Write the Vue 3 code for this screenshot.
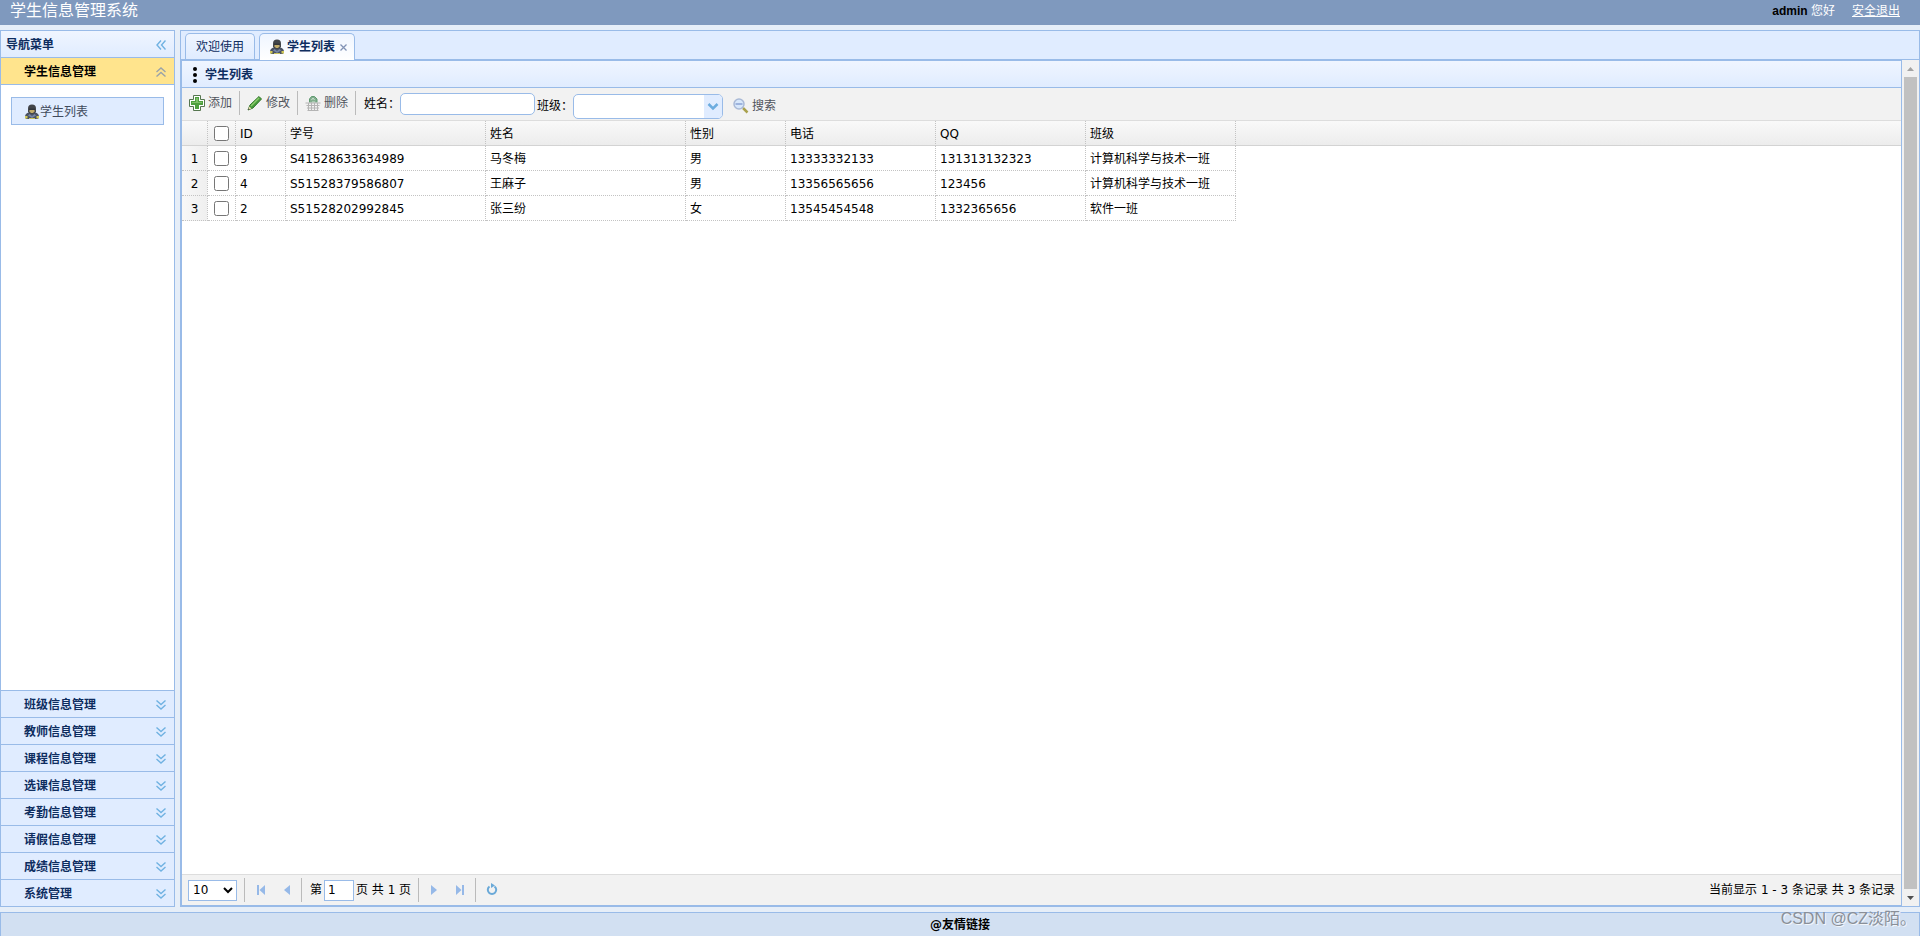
<script setup>
import { ref } from 'vue'

const openMenu = ref('学生信息管理')
const menus = [
  '班级信息管理',
  '教师信息管理',
  '课程信息管理',
  '选课信息管理',
  '考勤信息管理',
  '请假信息管理',
  '成绩信息管理',
  '系统管理'
]
const columns = ['ID', '学号', '姓名', '性别', '电话', 'QQ', '班级']
const rows = [
  ['9', 'S41528633634989', '马冬梅', '男', '13333332133', '131313132323', '计算机科学与技术一班'],
  ['4', 'S51528379586807', '王麻子', '男', '13356565656', '123456', '计算机科学与技术一班'],
  ['2', 'S51528202992845', '张三纷', '女', '13545454548', '1332365656', '软件一班']
]
const name = ref('')
const clazz = ref('')
const page = ref('1')
const pageSize = ref('10')
</script>

<template>
  <div class="app">
    <svg class="defs" aria-hidden="true">
      <symbol id="user" viewBox="0 0 16 16">
        <path d="M1 13q0-4 4-4.500h6q4 .5 4 4.500l-1 2H2z" fill="#4a5264" />
        <path d="M4 4.500Q4 .500 8 .500t4 4V8q-1 2-4 2T4 8z" fill="#42454a" />
        <path d="M5.500 5h5v2.500L9 9H7L5.500 7.500z" fill="#c2ac6a" />
        <path d="M5 4.500h6V6H5z" fill="#33363b" />
        <path d="M5.500 10L8 12l2.500-2 1.500 1.500L8 14l-4-2.500z" fill="#7484a4" />
        <path d="M1 12h2.500v2.500H1zM12.500 12H15v2.500h-2.500z" fill="#cfc758" />
        <path d="M5 14h6v1H5z" fill="#c9c25b" />
      </symbol>
      <symbol id="down" viewBox="0 0 10 10">
        <path d="M.5.500L5 4.500 9.500.500M.5 5L5 9 9.500 5" fill="none" stroke="currentColor" stroke-width="1.400" />
      </symbol>
    </svg>

    <header class="top">
      <span class="brand">学生信息管理系统</span>
      <span class="account"><strong>admin</strong> 您好</span>
      <a class="logout" href="#">安全退出</a>
    </header>

    <div class="body">
      <aside class="side">
        <div class="side-title">
          <span>导航菜单</span>
          <button class="bare light" type="button" aria-label="收起导航">
            <svg class="chev left"><use href="#down" /></svg>
          </button>
        </div>
        <button class="acc open" type="button">
          <span>{{ openMenu }}</span>
          <svg class="chev up"><use href="#down" /></svg>
        </button>
        <nav class="side-content">
          <a class="nav-item" href="#"><svg class="i16"><use href="#user" /></svg>学生列表</a>
        </nav>
        <button v-for="m in menus" :key="m" class="acc" type="button">
          <span>{{ m }}</span>
          <svg class="chev"><use href="#down" /></svg>
        </button>
      </aside>

      <main class="center">
        <div class="tabs">
          <button class="tab" type="button">欢迎使用</button>
          <div class="tab active">
            <button class="tab-label" type="button"><svg class="i16"><use href="#user" /></svg>学生列表</button>
            <button class="bare close" type="button" aria-label="关闭">
              <svg viewBox="0 0 7 7" width="7" height="7"><path d="M.5.500l6 6M6.500.500l-6 6" stroke="#8192b5" stroke-width="1.300" /></svg>
            </button>
          </div>
        </div>

        <div class="frame">
          <section class="panel">
            <h1 class="panel-title">
              <svg class="dots" viewBox="0 0 16 16" aria-hidden="true">
                <circle cx="8" cy="2" r="2" /><circle cx="8" cy="8" r="2" /><circle cx="8" cy="14" r="2" />
              </svg>学生列表
            </h1>

            <div class="toolbar">
              <div class="tools">
                <button class="tool" type="button">
                  <svg class="i16" viewBox="0 0 16 16">
                    <path d="M4.500 .500h7v4h4v7h-4v4h-7v-4h-4v-7h4z" fill="#fff" stroke="#56764f" stroke-linejoin="round" />
                    <path d="M6 2h4v4h4v4h-4v4H6v-4H2V6h4z" fill="#4f9f3f" />
                    <path d="M7 3h2v4h4v1H3V7h4z" fill="#7fc069" />
                  </svg>添加
                </button>
                <button class="tool" type="button">
                  <svg class="i16" viewBox="0 0 16 16">
                    <path d="M1 15l2-5 9-8.500 2.500 2.500-8.500 9z" fill="#469b3b" stroke="#35782e" />
                    <path d="M4 11l8-8" stroke="#8ccc6b" stroke-width="1.500" />
                    <path d="M1 15l1.300-3.500 2.200 2z" fill="#ead9ae" />
                    <path d="M1 15l.6-1.600 1 1z" fill="#333" />
                  </svg>修改
                </button>
                <button class="tool" type="button">
                  <svg class="i16" viewBox="0 0 16 16">
                    <path d="M4.500 8V4l2-2.500h3L12 4v4z" fill="#82ae8e" stroke="#5f9a70" />
                    <path d="M6.500 5L8 3l1.500 2M7 7h3" stroke="#c9e2ce" fill="none" />
                    <path d="M.5 7.500h15l-1.500 8H2z" fill="#f1f1f1" />
                    <path d="M.5 8h15M1.500 10.500h13M2 13h12M2.500 15.500h11M3.500 8v7M6.500 8v7M9.500 8v7M12.500 8v7" stroke="#b4b4b4" />
                  </svg>删除
                </button>
              </div>
              <label class="field-label" for="name">姓名：</label>
              <input id="name" v-model="name" class="text" type="text">
              <div class="tools low">
                <label class="class-label" for="clazz">班级：</label>
                <div class="combo">
                  <select id="clazz" v-model="clazz"><option value=""></option></select>
                  <svg class="combo-arrow" viewBox="0 0 18 23" aria-hidden="true">
                    <path d="M4.500 9l4.500 4.500L13.500 9" fill="none" stroke="#6cacdf" stroke-width="2.500" />
                  </svg>
                </div>
                <button class="tool search" type="button">
                  <svg class="i16" viewBox="0 0 16 16">
                    <path d="M10 10l4.500 4.500" stroke="#a9a14d" stroke-width="2.500" />
                    <circle cx="6" cy="6" r="5" fill="#d7e7fb" stroke="#a9b9d6" stroke-width="1.500" />
                    <path d="M2.500 6h7" stroke="#9db3dd" stroke-width="2" />
                  </svg>搜索
                </button>
              </div>
            </div>

            <div class="grid">
              <table>
                <colgroup>
                  <col class="w26"><col class="w28"><col class="w50"><col class="w200"><col class="w200">
                  <col class="w100"><col class="w150"><col class="w150"><col class="w150"><col>
                </colgroup>
                <thead>
                  <tr>
                    <th></th>
                    <th class="check"><input type="checkbox" aria-label="全选"></th>
                    <th v-for="c in columns" :key="c">{{ c }}</th>
                    <th class="fill"></th>
                  </tr>
                </thead>
                <tbody>
                  <tr v-for="(r, i) in rows" :key="r[0]">
                    <td class="num">{{ i + 1 }}</td>
                    <td class="check"><input type="checkbox" :aria-label="'选择 ' + r[2]"></td>
                    <td v-for="(v, j) in r" :key="j">{{ v }}</td>
                    <td class="fill"></td>
                  </tr>
                </tbody>
              </table>
            </div>

            <div class="pager">
              <select v-model="pageSize" class="size" aria-label="每页条数"><option>10</option></select>
              <div class="group">
                <button class="bare pg" type="button" aria-label="首页">
                  <svg viewBox="0 0 16 16"><path d="M4 3h2v10H4zM12 3v10L6.500 8z" /></svg>
                </button>
                <button class="bare pg" type="button" aria-label="上一页">
                  <svg viewBox="0 0 16 16"><path d="M12 3v10L6 8z" /></svg>
                </button>
              </div>
              <div class="group pages">
                <label for="page">第</label>
                <input id="page" v-model="page" class="page" type="text">
                <span>页 共 1 页</span>
              </div>
              <div class="group">
                <button class="bare pg" type="button" aria-label="下一页">
                  <svg viewBox="0 0 16 16"><path d="M4 3v10l6-5z" /></svg>
                </button>
                <button class="bare pg" type="button" aria-label="末页">
                  <svg viewBox="0 0 16 16"><path d="M4 3v10l5.500-5zM10 3h2v10h-2z" /></svg>
                </button>
              </div>
              <div class="group">
                <button class="bare pg" type="button" aria-label="刷新">
                  <svg viewBox="0 0 16 16">
                    <path d="M5.500 4.500a4.200 4.200 0 1 0 5 0" fill="none" stroke="#6aa9d8" stroke-width="2" />
                    <path d="M7 1l4 2.500-4 2.500z" fill="#6aa9d8" />
                  </svg>
                </button>
              </div>
              <span class="info">当前显示 1 - 3 条记录 共 3 条记录</span>
            </div>
          </section>

          <div class="scroll" aria-hidden="true">
            <svg viewBox="0 0 17 17"><path d="M5 11h7L8.500 7z" fill="#a3a3a3" /></svg>
            <div class="thumb"></div>
            <svg viewBox="0 0 17 17"><path d="M5 7h7l-3.500 4z" fill="#505050" /></svg>
          </div>
        </div>
      </main>
    </div>

    <footer class="foot">
      @友情链接
      <span class="mark">CSDN @CZ淡陌。</span>
    </footer>
  </div>
</template>

<style>
body {
  margin: 0;
}
</style>

<style scoped>
.app,
.app * {
  box-sizing: border-box;
}
.app {
  display: flex;
  flex-direction: column;
  gap: 5px;
  height: 100vh;
  overflow: hidden;
  background: #e6eef8;
  color: #000;
  font: 12px/16px "DejaVu Sans", "Noto Sans CJK SC", sans-serif;
}
.defs {
  position: absolute;
  width: 0;
  height: 0;
}
button,
input,
select {
  margin: 0;
  font: inherit;
  color: inherit;
}
button {
  padding: 0;
  border: 0;
  background: none;
}
.bare {
  display: flex;
}
.i16 {
  flex: none;
  width: 16px;
  height: 16px;
}

.top {
  display: flex;
  flex: none;
  height: 25px;
  padding: 0 20px 0 10px;
  background: #7f99be;
  color: #fff;
  line-height: 22px;
  font-family: "Liberation Sans", "Noto Sans CJK SC", sans-serif;
}
.brand {
  flex: 1;
  font-size: 16px;
}
.account strong {
  color: #000;
}
.logout {
  margin-left: 17px;
  color: #fff;
}

.body {
  display: flex;
  flex: 1;
  gap: 5px;
  min-height: 0;
}
.side {
  display: flex;
  flex-direction: column;
  flex: none;
  width: 175px;
  border: 1px solid #99bbe8;
  background: #fff;
}
.side-title {
  display: flex;
  flex: none;
  align-items: center;
  justify-content: space-between;
  height: 27px;
  padding: 1px 8px 0 5px;
  border-bottom: 1px solid #99bbe8;
  background: linear-gradient(#eff5ff, #e0ecff);
  color: #0e2d5f;
  font-weight: bold;
}
.light {
  color: #6fb5ea;
}
.chev {
  width: 10px;
  height: 10px;
  color: #70b2e2;
}
.chev.left {
  transform: rotate(90deg);
}
.chev.up {
  transform: rotate(180deg);
  color: #9aa3a8;
}
.acc {
  display: flex;
  flex: none;
  align-items: center;
  justify-content: space-between;
  height: 27px;
  padding: 1px 8px 0 23px;
  border-top: 1px solid #99bbe8;
  background: #e0ecff;
  color: #0e2d5f;
  font-weight: bold;
}
.acc.open {
  border-top: 0;
  border-bottom: 1px solid #99bbe8;
  background: #ffe48d;
  color: #000;
}
.side-content {
  flex: 1;
  padding: 12px 10px;
}
.nav-item {
  display: flex;
  align-items: center;
  height: 28px;
  padding: 2px 0 0 12px;
  border: 1px solid #99bbe8;
  background: #e0ecff;
  color: #404a5c;
  text-decoration: none;
}

.center {
  display: flex;
  flex-direction: column;
  flex: 1;
  min-width: 0;
  border: 1px solid #99bbe8;
  background: #fff;
}
.tabs {
  display: flex;
  flex: none;
  gap: 4px;
  height: 29px;
  padding: 2px 4px 0;
  border-bottom: 1px solid #99bbe8;
  background: #e0ecff;
}
.tab {
  display: flex;
  align-items: center;
  height: 26px;
  padding: 0 10px;
  border: 1px solid #99bbe8;
  border-bottom: 0;
  border-radius: 5px 5px 0 0;
  background: linear-gradient(#eff5ff, #e0ecff);
  color: #0e2d5f;
}
.tab.active {
  gap: 5px;
  height: 27px;
  padding: 0 7px 0 9px;
  background: linear-gradient(#eff5ff, #fff);
}
.tab-label {
  display: flex;
  align-items: center;
  gap: 2px;
  font-weight: bold;
}
.frame {
  display: flex;
  flex: 1;
  min-height: 0;
}
.panel {
  display: flex;
  flex-direction: column;
  flex: 1;
  min-width: 0;
  border: 1px solid #99bbe8;
}
.panel-title {
  display: flex;
  flex: none;
  align-items: center;
  gap: 2px;
  height: 27px;
  margin: 0;
  padding: 1px 5px 0;
  border-bottom: 1px solid #99bbe8;
  background: linear-gradient(#eff5ff, #e0ecff);
  color: #0e2d5f;
  font: inherit;
  font-weight: bold;
}
.dots {
  width: 16px;
  height: 16px;
  fill: #000;
}
.toolbar {
  display: flex;
  flex: none;
  align-items: center;
  height: 33px;
  border-bottom: 1px solid #ddd;
  background: #f2f2f2;
}
.tools {
  display: flex;
  align-self: flex-start;
  align-items: center;
  height: 29px;
}
.tools.low {
  align-self: flex-end;
  height: 28px;
}
.tool {
  display: flex;
  align-items: center;
  gap: 3px;
  height: 24px;
  padding: 0 7px;
  border-right: 1px solid #bbb;
  color: #50545c;
}
.tool.search {
  margin-left: 3px;
  border-right: 0;
}
.field-label {
  padding-left: 8px;
}
.text {
  width: 135px;
  height: 22px;
  padding: 0 4px;
  border: 1px solid #99bbe8;
  border-radius: 5px;
  background: #fff;
}
.class-label {
  padding-left: 2px;
}
.combo {
  position: relative;
  display: flex;
  width: 150px;
  height: 25px;
}
.combo select {
  width: 100%;
  padding: 0 20px 0 4px;
  border: 1px solid #99bbe8;
  border-radius: 5px;
  background: #fff;
  appearance: none;
}
.combo-arrow {
  position: absolute;
  top: 1px;
  right: 1px;
  width: 18px;
  height: 23px;
  border-radius: 0 4px 4px 0;
  background: #e0ecff;
  pointer-events: none;
}

.grid {
  flex: 1;
  min-height: 0;
  overflow: hidden;
}
table {
  width: 100%;
  table-layout: fixed;
  border-spacing: 0;
}
.w26 { width: 26px; }
.w28 { width: 28px; }
.w50 { width: 50px; }
.w100 { width: 100px; }
.w150 { width: 150px; }
.w200 { width: 200px; }
th,
td {
  height: 25px;
  padding: 2px 4px 0;
  border-right: 1px dotted #c3c3c3;
  border-bottom: 1px dotted #c3c3c3;
  font-weight: normal;
  text-align: left;
  white-space: nowrap;
}
thead tr {
  background: linear-gradient(#f9f9f9, #ececec);
}
th {
  border-bottom: 1px solid #d3d3d3;
}
th.fill {
  border-right: 0;
}
td.fill {
  border: 0;
}
.num {
  background: linear-gradient(90deg, #f8f8f8, #efefef);
  text-align: center;
}
.check {
  padding: 0 6px;
}
.check input {
  display: block;
  width: 15px;
  height: 15px;
}

.pager {
  display: flex;
  flex: none;
  align-items: center;
  height: 31px;
  padding: 0 6px;
  border-top: 1px solid #ddd;
  background: #f2f2f2;
}
.size {
  width: 49px;
  height: 21px;
  margin-right: 7px;
  border: 1px solid #99bbe8;
  background: #fff;
}
.group {
  display: flex;
  align-items: center;
  height: 24px;
  padding: 0 3px;
  border-left: 1px solid #bbb;
}
.group.pages {
  gap: 2px;
  padding: 0 7px 0 8px;
}
.pg {
  justify-content: center;
  width: 25px;
}
.pg svg {
  width: 16px;
  height: 16px;
  fill: #96b9e8;
}
.page {
  width: 30px;
  height: 21px;
  padding: 0 3px;
  border: 1px solid #99bbe8;
  background: #fff;
}
.info {
  margin-left: auto;
}

.scroll {
  display: flex;
  flex-direction: column;
  flex: none;
  width: 17px;
  background: #f1f1f1;
}
.scroll svg {
  width: 17px;
  height: 17px;
}
.thumb {
  flex: 1;
  margin: 0 2px;
  background: #c1c1c1;
}

.foot {
  position: relative;
  flex: none;
  height: 24px;
  border: 1px solid #99bbe8;
  border-bottom: 0;
  background: #d2e0f2;
  font-weight: bold;
  line-height: 24px;
  text-align: center;
}
.mark {
  position: absolute;
  right: 3px;
  bottom: 5px;
  color: #8a8f98;
  font: 16px/24px "Liberation Sans", "Noto Sans CJK SC", sans-serif;
  text-shadow: 1px 1px 0 #f3f6fa;
  pointer-events: none;
}
</style>
